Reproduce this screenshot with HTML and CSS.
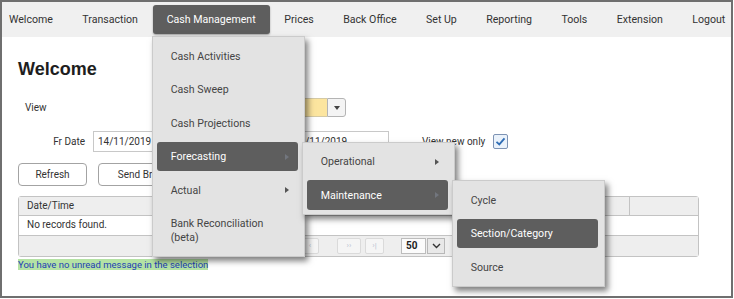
FILE: index.html
```html
<!DOCTYPE html>
<html lang="en">
<head>
    <meta charset="UTF-8">
    <meta name="viewport" content="width=device-width, initial-scale=1.0">
    <title>Welcome</title>
    <link rel="stylesheet" href="styles.css">
</head>
<body>
<div class="frame">
    <ul class="nav">
        <li>Welcome</li>
        <li>Transaction</li>
        <li class="active">Cash Management
            <ul class="menu">
                <li>Cash Activities</li>
                <li>Cash Sweep</li>
                <li>Cash Projections</li>
                <li class="open">Forecasting<span class="arrow"></span>
                    <ul class="menu sub">
                        <li>Operational<span class="arrow"></span></li>
                        <li class="open">Maintenance<span class="arrow"></span>
                            <ul class="menu sub">
                                <li>Cycle</li>
                                <li class="open">Section/Category</li>
                                <li>Source</li>
                            </ul>
                        </li>
                    </ul>
                </li>
                <li>Actual<span class="arrow"></span></li>
                <li>Bank Reconciliation<br>(beta)</li>
            </ul>
        </li>
        <li>Prices</li>
        <li>Back Office</li>
        <li>Set Up</li>
        <li>Reporting</li>
        <li>Tools</li>
        <li>Extension</li>
        <li>Logout</li>
    </ul>

    <div class="content">
        <h1>Welcome</h1>

        <div class="field-row view-row">
            <span class="lbl">View</span>
            <span class="select-box"></span>
            <span class="select-btn"><span class="caret"></span></span>
        </div>

        <div class="field-row date-row">
            <span class="lbl date-lbl">Fr Date</span>
            <span class="input">14/11/2019</span>
            <span class="lbl to-lbl">To Date</span>
            <span class="input">14/11/2019</span>
            <span class="new-only">View new only</span>
            <span class="check">
                <svg width="11" height="11" viewBox="0 0 11 11"><path d="M1.5 5.8 L4.3 8.4 L9.5 2.3" fill="none" stroke="#2f6db5" stroke-width="1.8"/></svg>
            </span>
        </div>

        <div class="buttons">
            <button class="btn">Refresh</button>
            <button class="btn wide">Send Broadcast</button>
        </div>

        <div class="grid">
            <div class="grid-head">
                <div class="cell">Date/Time</div>
                <div class="cell"></div>
            </div>
            <div class="grid-row">
                <div class="cell">No records found.</div>
            </div>
            <div class="pager">
                <span class="pg-btn">|&lsaquo;</span>
                <span class="pg-btn">&lsaquo;</span>
                <span class="pg-btn next">&rsaquo;&rsaquo;</span>
                <span class="pg-btn last">&rsaquo;|</span>
                <span class="pg-size">50</span>
                <span class="pg-drop">
                    <svg width="9" height="6" viewBox="0 0 9 6"><path d="M1 1 L4.5 4.5 L8 1" fill="none" stroke="#333" stroke-width="1.4"/></svg>
                </span>
            </div>
        </div>

        <p class="msg"><span>You have no unread message in the selection</span></p>
    </div>
</div>
</body>
</html>
```

FILE: styles.css
```css
* {
    box-sizing: border-box;
}
body {
    margin: 0;
    font-family: Roboto, "Liberation Sans", sans-serif;
    color: #333;
    background: #fff;
}
.frame {
    position: relative;
    width: 733px;
    height: 298px;
    border: 2px solid #6f6f6f;
    overflow: hidden;
}

/* top navigation */
.nav {
    display: flex;
    list-style: none;
    margin: 0;
    padding: 3px 0;
    height: 35px;
    background: #f0f0f0;
}
.nav > li {
    position: relative;
    padding: 0 14.7px;
    line-height: 29px;
    font-size: 10.6px;
    color: #333;
    white-space: nowrap;
}
.nav > li:first-child {
    padding-left: 7px;
}
.nav > li.active {
    background: #5e5e5e;
    color: #fff;
    border-radius: 3px;
    box-shadow: 0 1px 2px rgba(0, 0, 0, 0.35);
    padding: 0 14px;
}

/* dropdown menus */
.menu {
    position: absolute;
    left: -1px;
    top: 31px;
    z-index: 10;
    width: 153px;
    margin: 0;
    padding: 4px 6px 4px 4px;
    list-style: none;
    display: flex;
    flex-direction: column;
    gap: 4px;
    background: #e3e3e3;
    border: 1px solid #cbcbcb;
    box-shadow: 3px 4px 6px rgba(0, 0, 0, 0.5);
}
.menu.sub {
    left: calc(100% + 4px);
    top: 0;
}
.menu li {
    position: relative;
    padding: 8.5px 14px 7px;
    line-height: 14px;
    font-size: 10.6px;
    color: #454545;
    border-radius: 3px;
    white-space: nowrap;
}
.menu li.open {
    background: #5e5e5e;
    color: #fff;
}
.arrow {
    position: absolute;
    right: 9px;
    top: 12px;
    border-left: 4px solid #555;
    border-top: 3px solid transparent;
    border-bottom: 3px solid transparent;
}
.open > .arrow {
    border-left-color: #72767e;
}

/* page content */
.content {
    padding-left: 16px;
    font-size: 10px;
}
h1 {
    margin: 21px 0 0;
    font: bold 18px/22px "Liberation Sans", Arial, sans-serif;
    color: #1e1e1e;
}
.field-row {
    display: flex;
    align-items: center;
}
.view-row {
    margin-top: 18px;
    height: 19px;
}
.view-row .lbl {
    width: 152px;
    padding-left: 7px;
}
.select-box {
    width: 157px;
    height: 19px;
    background: #fce59f;
    border: 1px solid #d4c9a4;
    border-right: none;
}
.select-btn {
    display: flex;
    align-items: center;
    justify-content: center;
    width: 19px;
    height: 19px;
    background: #f4f4f4;
    border: 1px solid #b4b4b4;
    border-radius: 0 3px 3px 0;
}
.caret {
    border-top: 4px solid #444;
    border-left: 3.5px solid transparent;
    border-right: 3.5px solid transparent;
}
.date-row {
    margin-top: 14px;
    height: 21px;
}
.date-lbl {
    width: 75px;
    text-align: right;
    padding-right: 8px;
}
.to-lbl {
    width: 96px;
    text-align: right;
    padding-right: 8px;
}
.input {
    width: 100px;
    height: 21px;
    line-height: 19px;
    padding-left: 4px;
    border: 1px solid #c8c8c8;
    background: #fff;
}
.new-only {
    margin-left: 33px;
}
.check {
    display: flex;
    align-items: center;
    justify-content: center;
    width: 15px;
    height: 15px;
    margin-left: 8px;
    border: 1px solid #7d93b4;
    border-radius: 2px;
    background: #eaf2fb;
}
.buttons {
    display: flex;
    gap: 11px;
    margin-top: 11px;
}
.btn {
    width: 69px;
    height: 23px;
    font: 10px Roboto, "Liberation Sans", sans-serif;
    color: #333;
    background: #fff;
    border: 1px solid #a3a3a3;
    border-radius: 4px;
}
.btn.wide {
    width: 110px;
}

/* results grid */
.grid {
    width: 681px;
    margin-top: 10px;
    border: 1px solid #c3c3c3;
    border-radius: 3px;
}
.grid-head {
    display: grid;
    grid-template-columns: 1fr 69px;
    height: 19px;
    background: #eee;
    border-bottom: 1px solid #c3c3c3;
}
.grid-head .cell + .cell {
    border-left: 1px solid #c3c3c3;
}
.cell {
    padding-left: 8px;
    line-height: 18px;
}
.grid-row {
    height: 19px;
    background: #fff;
}
.pager {
    display: flex;
    align-items: center;
    height: 21px;
    padding-left: 260px;
    background: #eee;
    border-top: 1px solid #c3c3c3;
}
.pg-btn {
    width: 18px;
    height: 16px;
    margin-right: 4px;
    line-height: 14px;
    text-align: center;
    font-size: 8px;
    color: #b9c3d3;
    background: #f5f5f5;
    border: 1px solid #dadada;
    border-radius: 2px;
}
.pg-btn.next {
    width: 24px;
    margin-left: 14px;
}
.pg-btn.last {
    width: 19px;
    margin-right: 17px;
}
.pg-size {
    width: 25px;
    height: 16px;
    line-height: 14px;
    padding-left: 4px;
    font-weight: bold;
    color: #222;
    background: #fbfbfb;
    border: 1px solid #bcbcbc;
}
.pg-drop {
    display: flex;
    align-items: center;
    justify-content: center;
    width: 18px;
    height: 16px;
    margin-left: 1px;
    background: #e8e8e8;
    border: 1px solid #b8b8b8;
}
.msg {
    margin: 2px 0 0;
    line-height: 12px;
    font-size: 9.5px;
    color: #1d3fb4;
}
.msg span {
    background: #b4e2a4;
}
```
